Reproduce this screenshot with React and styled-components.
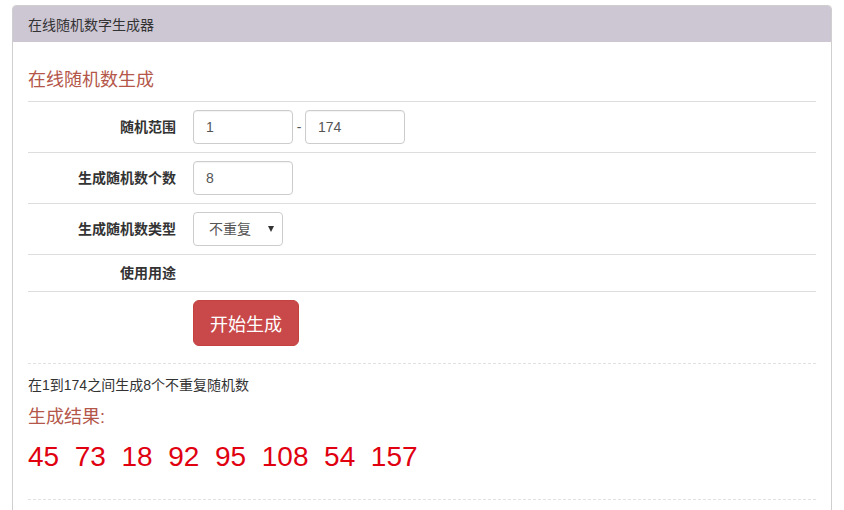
import React from "react";
import styled, { createGlobalStyle } from "styled-components";

const Global = createGlobalStyle`
  html, body { margin: 0; padding: 0; background: #fff; }
  body {
    font-family: "Liberation Sans", Arial, "Noto Sans CJK SC", sans-serif;
    font-size: 14px;
    color: #333;
  }
  * { box-sizing: border-box; }
`;

const Page = styled.div`
  padding: 5px 12px 0;
`;

const Panel = styled.div`
  border: 1px solid #cfcfcf;
  border-radius: 4px;
  overflow: hidden;
  background: #fff;
`;

const PanelHeader = styled.div`
  background: #cdc6d3;
  height: 36px;
  padding: 0 15px;
  display: flex;
  align-items: center;
  font-size: 14px;
  color: #333;
`;

const PanelBody = styled.div`
  padding: 24px 15px 30px;
`;

const Title = styled.h3`
  margin: 0;
  font-size: 18px;
  font-weight: normal;
  line-height: 28px;
  color: #b4574a;
  padding-bottom: 7px;
  border-bottom: 1px solid #ddd;
`;

const Row = styled.div`
  display: grid;
  grid-template-columns: 148px 1fr;
  column-gap: 17px;
  align-items: center;
  padding: 8px 0;
  border-bottom: ${(p) => (p.$last ? "1px dashed #e2e2e2" : "1px solid #ddd")};
  padding-bottom: ${(p) => (p.$last ? "17px" : "8px")};
`;

const Label = styled.label`
  text-align: right;
  font-weight: bold;
  font-size: 14px;
  line-height: 20px;
  color: #333;
`;

const Controls = styled.div`
  display: flex;
  align-items: center;
`;

const Input = styled.input`
  width: 100px;
  height: 34px;
  padding: 6px 12px;
  border: 1px solid #ccc;
  border-radius: 4px;
  font-family: "Liberation Sans", Arial, sans-serif;
  font-size: 14px;
  color: #555;
  outline: none;
  box-shadow: inset 0 1px 1px rgba(0, 0, 0, 0.05);
`;

const Dash = styled.span`
  width: 12px;
  text-align: center;
  color: #555;
  font-size: 14px;
`;

const SelectWrap = styled.div`
  position: relative;
  width: 90px;
  height: 34px;
`;

const Select = styled.select`
  appearance: none;
  -webkit-appearance: none;
  width: 100%;
  height: 100%;
  padding: 0 0 0 15px;
  border: 1px solid #ccc;
  border-radius: 4px;
  background: #fff;
  font-family: "Liberation Sans", Arial, "Noto Sans CJK SC", sans-serif;
  font-size: 14px;
  color: #555;
  outline: none;
`;

const Arrow = styled.span`
  position: absolute;
  right: 9px;
  top: 50%;
  transform: translateY(-50%);
  width: 0;
  height: 0;
  border-left: 3.5px solid transparent;
  border-right: 3.5px solid transparent;
  border-top: 6px solid #333;
  pointer-events: none;
`;

const Button = styled.button`
  height: 46px;
  padding: 0 16px;
  border: 1px solid #c3413f;
  border-radius: 6px;
  background: #c9494a;
  color: #fff;
  font-family: "Liberation Sans", Arial, "Noto Sans CJK SC", sans-serif;
  font-size: 18px;
  cursor: pointer;
`;

const Result = styled.div`
  padding: 11px 0 22px;
  border-bottom: 1px dashed #e2e2e2;
`;

const Desc = styled.p`
  margin: 0;
  font-size: 14px;
  line-height: 20px;
  color: #333;
`;

const ResultTitle = styled.div`
  margin-top: 10px;
  font-size: 18px;
  line-height: 24px;
  color: #b4574a;
`;

const Numbers = styled.div`
  margin-top: 8px;
  display: flex;
  gap: 15.6px;
  font-family: "Liberation Sans", Arial, sans-serif;
  font-size: 28px;
  line-height: 40px;
  color: #e00010;
`;

const nums = [45, 73, 18, 92, 95, 108, 54, 157];

export default function App() {
  return (
    <>
      <Global />
      <Page>
        <Panel>
          <PanelHeader>在线随机数字生成器</PanelHeader>
          <PanelBody>
            <Title>在线随机数生成</Title>
            <Row>
              <Label>随机范围</Label>
              <Controls>
                <Input defaultValue="1" />
                <Dash>-</Dash>
                <Input defaultValue="174" />
              </Controls>
            </Row>
            <Row>
              <Label>生成随机数个数</Label>
              <Controls>
                <Input defaultValue="8" />
              </Controls>
            </Row>
            <Row>
              <Label>生成随机数类型</Label>
              <Controls>
                <SelectWrap>
                  <Select defaultValue="0">
                    <option value="0">不重复</option>
                    <option value="1">可重复</option>
                  </Select>
                  <Arrow />
                </SelectWrap>
              </Controls>
            </Row>
            <Row>
              <Label>使用用途</Label>
              <Controls />
            </Row>
            <Row $last>
              <Label />
              <Controls>
                <Button>开始生成</Button>
              </Controls>
            </Row>
            <Result>
              <Desc>在1到174之间生成8个不重复随机数</Desc>
              <ResultTitle>生成结果:</ResultTitle>
              <Numbers>
                {nums.map((n, i) => (
                  <span key={i}>{n}</span>
                ))}
              </Numbers>
            </Result>
          </PanelBody>
        </Panel>
      </Page>
    </>
  );
}
